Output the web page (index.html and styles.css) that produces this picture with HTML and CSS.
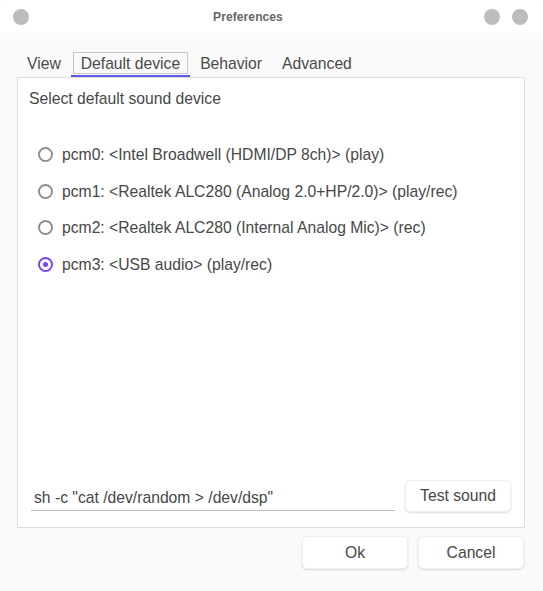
FILE: index.html
```html
<!DOCTYPE html>
<html>
<head>
<meta charset="utf-8">
<title>Preferences</title>
<link rel="stylesheet" href="styles.css">
</head>
<body>
<div class="window">
  <div class="titlebar">
    <span class="dot"></span>
    <div class="title">Preferences</div>
    <div class="dots">
      <span class="dot"></span>
      <span class="dot"></span>
    </div>
  </div>
  <div class="content">
    <div class="tabs">
      <div class="tab"><div class="tab-label">View</div><div class="tab-line"></div></div>
      <div class="tab active"><div class="tab-label">Default device</div><div class="tab-line"></div></div>
      <div class="tab"><div class="tab-label">Behavior</div><div class="tab-line"></div></div>
      <div class="tab"><div class="tab-label">Advanced</div><div class="tab-line"></div></div>
    </div>
    <div class="panel">
      <div class="heading">Select default sound device</div>
      <div class="radios">
        <div class="radio"><span class="ring"></span><span>pcm0: &lt;Intel Broadwell (HDMI/DP 8ch)&gt; (play)</span></div>
        <div class="radio"><span class="ring"></span><span>pcm1: &lt;Realtek ALC280 (Analog 2.0+HP/2.0)&gt; (play/rec)</span></div>
        <div class="radio"><span class="ring"></span><span>pcm2: &lt;Realtek ALC280 (Internal Analog Mic)&gt; (rec)</span></div>
        <div class="radio checked"><span class="ring"></span><span>pcm3: &lt;USB audio&gt; (play/rec)</span></div>
      </div>
      <div class="spacer"></div>
      <div class="cmd-row">
        <div class="field">sh -c "cat /dev/random &gt; /dev/dsp"</div>
        <div class="button">Test sound</div>
      </div>
    </div>
    <div class="footer">
      <div class="button wide">Ok</div>
      <div class="button wide">Cancel</div>
    </div>
  </div>
</div>
</body>
</html>
```
FILE: styles.css
```css
html, body {
  margin: 0;
  padding: 0;
  background: #ffffff;
}
body {
  font-family: "Liberation Sans", Arial, sans-serif;
  color: #474747;
}
.window {
  width: 543px;
  height: 591px;
  background: #fafafa;
  border-radius: 8px 8px 0 0;
  overflow: hidden;
  display: flex;
  flex-direction: column;
}
.titlebar {
  height: 33px;
  background: #ffffff;
  display: flex;
  align-items: center;
  padding: 0 15px 0 13px;
  flex: none;
}
.dot {
  width: 16px;
  height: 16px;
  border-radius: 50%;
  background: #bcbcbc;
  display: block;
}
.dots {
  display: flex;
  gap: 12px;
}
.title {
  flex: 1;
  text-align: center;
  font-size: 12px;
  font-weight: bold;
  color: #666666;
  padding-right: 17px;
  letter-spacing: 0.1px;
}
.content {
  padding: 19px 18px 0 17px;
  display: flex;
  flex-direction: column;
}
.tabs {
  display: flex;
  gap: 4px;
  padding-left: 2px;
}
.tab {
  display: flex;
  flex-direction: column;
}
.tab-label {
  height: 22px;
  box-sizing: border-box;
  border: 1px solid transparent;
  padding: 1px 7px 0;
  line-height: 19px;
  font-size: 15.7px;
  color: #4a4a4a;
}
.tab-line {
  height: 2px;
  margin: 1px -2px 0;
}
.tab.active .tab-label {
  border-color: #c6c6c6;
}
.tab.active .tab-line {
  background: #5b5be8;
}
.panel {
  height: 451px;
  box-sizing: border-box;
  border: 1px solid #dedede;
  background: #ffffff;
  padding: 12px 11px 11px;
  display: flex;
  flex-direction: column;
}
.heading {
  font-size: 15.7px;
  line-height: 18px;
}
.radios {
  margin-top: 28px;
  display: flex;
  flex-direction: column;
}
.radio {
  height: 36.7px;
  display: flex;
  align-items: center;
  gap: 9px;
  font-size: 15.7px;
}
.radio span:last-child {
  padding-top: 1px;
}
.ring {
  width: 15px;
  height: 15px;
  box-sizing: border-box;
  border: 2px solid #8e8e8e;
  border-radius: 50%;
  margin-left: 9px;
  display: flex;
  align-items: center;
  justify-content: center;
}
.radio.checked .ring {
  border-color: #7445f2;
}
.radio.checked .ring::after {
  content: "";
  width: 5px;
  height: 5px;
  border-radius: 50%;
  background: #7445f2;
}
.spacer {
  flex: 1;
}
.cmd-row {
  display: flex;
  align-items: center;
  gap: 10px;
  margin: 0 2px 4px 2px;
}
.field {
  flex: 1;
  height: 30px;
  box-sizing: border-box;
  border-bottom: 1px solid #bdbdbd;
  padding: 8px 0 0 3px;
  font-size: 15.7px;
  line-height: 18px;
}
.button {
  width: 106px;
  height: 32px;
  box-sizing: border-box;
  background: #ffffff;
  border: 1px solid #efefef;
  border-radius: 5px;
  box-shadow: 0 1px 2px rgba(0, 0, 0, 0.14);
  display: flex;
  align-items: center;
  justify-content: center;
  font-size: 15.7px;
  color: #474747;
  padding-bottom: 0;
}
.button.wide {
  height: 33px;
}
.footer {
  display: flex;
  justify-content: flex-end;
  gap: 10px;
  margin-top: 8px;
  padding-right: 1px;
}
```
